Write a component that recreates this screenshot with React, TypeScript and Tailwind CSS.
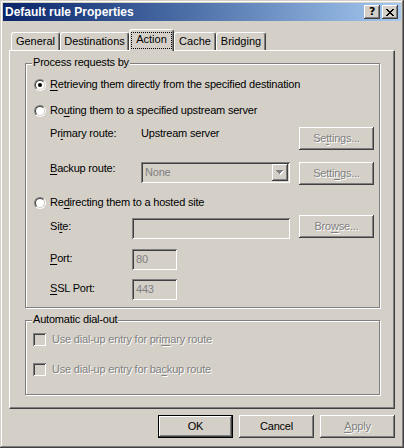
import React from "react";

const raised =
  "shadow-[inset_-1px_-1px_#404040,inset_1px_1px_#ffffff,inset_-2px_-2px_#808080,inset_2px_2px_#d4d0c8]";
const sunken =
  "shadow-[inset_1px_1px_#808080,inset_-1px_-1px_#ffffff,inset_2px_2px_#404040,inset_-2px_-2px_#d4d0c8]";
const dis = "text-[#808080] [text-shadow:1px_1px_0_#ffffff]";

function U({ children }: { children: React.ReactNode }) {
  return <span className="underline underline-offset-[2px] decoration-1">{children}</span>;
}

function Radio({ checked }: { checked?: boolean }) {
  return (
    <div className="w-[12px] h-[12px] shrink-0 rounded-full border border-t-[#808080] border-l-[#808080] border-r-white border-b-white flex">
      <div className="w-[10px] h-[10px] rounded-full border border-t-[#404040] border-l-[#404040] border-r-[#d4d0c8] border-b-[#d4d0c8] bg-white flex items-center justify-center">
        {checked && <div className="w-[4px] h-[4px] rounded-full bg-black" />}
      </div>
    </div>
  );
}

function Check() {
  return <div className={`w-[13px] h-[13px] shrink-0 bg-[#d4d0c8] ${sunken}`} />;
}

function Btn({
  children,
  disabled,
  isDefault,
}: {
  children: React.ReactNode;
  disabled?: boolean;
  isDefault?: boolean;
}) {
  if (isDefault) {
    return (
      <div className="w-[75px] h-[23px] shrink-0 border border-black flex">
        <div className={`flex-1 flex items-center justify-center ${raised}`}>
          <span className={disabled ? dis : "text-black"}>{children}</span>
        </div>
      </div>
    );
  }
  return (
    <div className={`w-[75px] h-[23px] shrink-0 flex items-center justify-center ${raised}`}>
      <span className={disabled ? dis : "text-black"}>{children}</span>
    </div>
  );
}

function Edit({ w, value }: { w: string; value?: string }) {
  return (
    <div className={`${w} h-[21px] shrink-0 bg-[#d4d0c8] ${sunken} flex items-center pl-[4px]`}>
      <span className="text-[#808080]">{value}</span>
    </div>
  );
}

function SelTab({ label }: { label: React.ReactNode }) {
  return (
    <div className="relative z-10 w-[45px] h-[22px] bg-[#d4d0c8] rounded-t-[3px] border-t border-l border-white border-r border-r-[#404040] shadow-[inset_-1px_0_#808080] flex justify-center pt-[2px]">
      <div className="h-[17px] w-[41px] border border-dotted border-black flex items-start justify-center">
        {label}
      </div>
    </div>
  );
}

function UTab({ label, w }: { label: string; w: string }) {
  return (
    <div
      className={`${w} h-[18px] mb-[1px] shrink-0 rounded-t-[3px] border-t border-l border-white border-r border-r-[#404040] shadow-[inset_-1px_0_#808080] flex items-center justify-center`}
    >
      {label}
    </div>
  );
}

function GroupBox({
  title,
  h,
  children,
  mt,
}: {
  title: string;
  h: string;
  children: React.ReactNode;
  mt: string;
}) {
  return (
    <div
      className={`relative ${mt} ml-[15px] w-[355px] ${h} border border-[#808080] shadow-[inset_1px_1px_#ffffff,1px_1px_#ffffff]`}
    >
      <span className="absolute top-[-8px] left-[6px] px-[1px] bg-[#d4d0c8] leading-[13px]">{title}</span>
      {children}
    </div>
  );
}

export default function App() {
  return (
    <div className="w-[404px] h-[448px] bg-[#d4d0c8] flex flex-col text-[11px] leading-[13px] tracking-[-0.2px] text-black font-['Liberation_Sans',Arial,sans-serif] shadow-[inset_-1px_-1px_#404040,inset_1px_1px_#d4d0c8,inset_-2px_-2px_#808080,inset_2px_2px_#ffffff] select-none">
      {/* Title bar */}
      <div className="mt-[3px] mx-[3px] h-[18px] bg-linear-to-r from-[#0a246a] to-[#a6caf0] flex items-center justify-between">
        <span className="pl-[2px] text-white font-bold text-[12px] leading-[14px] tracking-normal">
          Default rule Properties
        </span>
        <div className="flex gap-[2px] pr-[3px]">
          <div className={`w-[16px] h-[14px] bg-[#d4d0c8] ${raised} flex items-center justify-center`}>
            <span className="font-bold text-[11px] leading-[11px] font-['DejaVu_Sans',sans-serif] -mt-[1px]">?</span>
          </div>
          <div className={`w-[16px] h-[14px] bg-[#d4d0c8] ${raised} flex items-center justify-center`}>
            <svg width="8" height="7" viewBox="0 0 8 7" shapeRendering="crispEdges">
              <path
                d="M0 0h2v1h-2zM6 0h2v1h-2zM1 1h2v1h-2zM5 1h2v1h-2zM2 2h4v1h-4zM3 3h2v1h-2zM2 4h4v1h-4zM1 5h2v1h-2zM5 5h2v1h-2zM0 6h2v1h-2zM6 6h2v1h-2z"
                fill="#000"
              />
            </svg>
          </div>
        </div>
      </div>

      {/* Tabs */}
      <div className="mt-[8px] ml-[11px] h-[22px] -mb-[1px] flex items-end relative z-10 tracking-normal">
        <UTab label="General" w="w-[49px]" />
        <UTab label="Destinations" w="w-[69px]" />
        <SelTab label="Action" />
        <UTab label="Cache" w="w-[42px]" />
        <UTab label="Bridging" w="w-[50px]" />
      </div>

      {/* Panel */}
      <div className="ml-[9px] w-[386px] h-[359px] border-t border-l border-white border-r border-b border-r-[#404040] border-b-[#404040] shadow-[inset_-1px_-1px_#808080] flex flex-col">
        <GroupBox title="Process requests by" h="h-[245px]" mt="mt-[12px]">
          <div className="flex flex-col pl-[8px]">
            <div className="mt-[14px] h-[13px] flex items-center gap-[4px]">
              <Radio checked />
              <span>
                <U>R</U>etrieving them directly from the specified destination
              </span>
            </div>
            <div className="mt-[13px] h-[13px] flex items-center gap-[4px]">
              <Radio />
              <span>
                Ro<U>u</U>ting them to a specified upstream server
              </span>
            </div>
            <div className="mt-[9px] flex items-start pl-[16px]">
              <span className="w-[91px] mt-[1px]">
                Pr<U>i</U>mary route:
              </span>
              <span className="w-[158px] mt-[1px]">Upstream server</span>
              <div className="mt-[1px]">
                <Btn disabled>
                  Se<U>t</U>tings...
                </Btn>
              </div>
            </div>
            <div className="mt-[12px] flex items-start pl-[16px]">
              <span className="w-[91px]">
                <U>B</U>ackup route:
              </span>
              <div className={`w-[149px] h-[21px] bg-[#d4d0c8] ${sunken} flex items-center pl-[4px] pr-[2px]`}>
                <span className="flex-1 text-[#808080]">None</span>
                <div className={`w-[16px] h-[17px] bg-[#d4d0c8] ${raised} flex items-center justify-center`}>
                  <svg width="8" height="5" viewBox="0 0 8 5" shapeRendering="crispEdges">
                    <path d="M1 1h7v1h-7zM2 2h5v1h-5zM3 3h3v1h-3zM4 4h1v1h-1z" fill="#ffffff" />
                    <path d="M0 0h7v1h-7zM1 1h5v1h-5zM2 2h3v1h-3zM3 3h1v1h-1z" fill="#808080" />
                  </svg>
                </div>
              </div>
              <div className="ml-[9px]">
                <Btn disabled>
                  Setti<U>n</U>gs...
                </Btn>
              </div>
            </div>
            <div className="mt-[11px] h-[13px] flex items-center gap-[4px]">
              <Radio />
              <span>
                Re<U>d</U>irecting them to a hosted site
              </span>
            </div>
            <div className="mt-[6px] flex items-start pl-[16px]">
              <span className="w-[82px] mt-[5px]">
                Si<U>t</U>e:
              </span>
              <div className="mt-[3px]">
                <Edit w="w-[158px]" />
              </div>
              <div className="ml-[9px]">
                <Btn disabled>
                  Bro<U>w</U>se...
                </Btn>
              </div>
            </div>
            <div className="mt-[10px] flex items-start pl-[16px]">
              <span className="w-[82px] mt-[3px]">
                <U>P</U>ort:
              </span>
              <Edit w="w-[45px]" value="80" />
            </div>
            <div className="mt-[9px] flex items-start pl-[16px]">
              <span className="w-[82px] mt-[3px]">
                <U>S</U>SL Port:
              </span>
              <Edit w="w-[45px]" value="443" />
            </div>
          </div>
        </GroupBox>

        <GroupBox title="Automatic dial-out" h="h-[75px]" mt="mt-[12px]">
          <div className="flex flex-col pl-[7px]">
            <div className="mt-[12px] h-[13px] flex items-center gap-[6px]">
              <Check />
              <span className={dis}>
                Use dial-up entry for pri<U>m</U>ary route
              </span>
            </div>
            <div className="mt-[17px] h-[13px] flex items-center gap-[6px]">
              <Check />
              <span className={dis}>
                Use dial-up entry for ba<U>c</U>kup route
              </span>
            </div>
          </div>
        </GroupBox>
      </div>

      {/* Buttons */}
      <div className="mt-[6px] ml-[158px] flex gap-[6px]">
        <Btn isDefault>OK</Btn>
        <Btn>Cancel</Btn>
        <Btn disabled>
          <U>A</U>pply
        </Btn>
      </div>
    </div>
  );
}
